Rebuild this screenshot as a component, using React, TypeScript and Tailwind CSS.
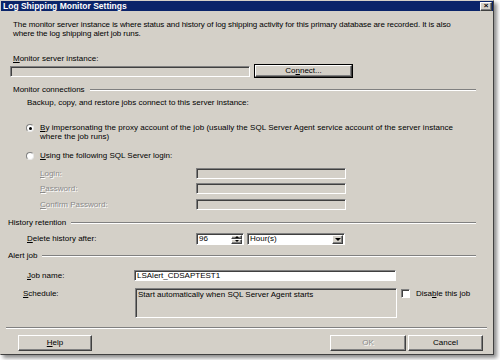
const sunken =
    'border border-t-[#808080] border-l-[#808080] border-b-white border-r-white shadow-[inset_1px_1px_0_#404040]'
const raised =
    'border border-t-white border-l-white border-b-[#404040] border-r-[#404040] shadow-[inset_-1px_-1px_0_#808080] bg-[#d4d0c8]'

function GroupHeader({ label, indent }: { label: string; indent: string }) {
    return (
        <div className={`flex items-center h-[9px] leading-[9px] mr-[17px] ${indent}`}>
            <span className="pr-[5px] whitespace-nowrap">{label}</span>
            <div className="flex-1 h-[2px] border-t border-t-[#808080] border-b border-b-white" />
        </div>
    )
}

function Radio({ checked }: { checked?: boolean }) {
    return (
        <div className="w-[8px] h-[8px] rounded-full bg-white border border-t-[#808080] border-l-[#808080] border-b-[#e8e8e8] border-r-[#e8e8e8] flex items-center justify-center shrink-0">
            {checked && <div className="w-[3px] h-[3px] rounded-full bg-black" />}
        </div>
    )
}

function DisabledRow({ label, u, rest, className }: { label?: string; u: string; rest: string; className: string }) {
    return (
        <div className={`flex items-center h-[11px] ${className}`}>
            <span className="ml-[39px] w-[156px] text-[#8a8a8a] [text-shadow:1px_1px_0_#fff]">
                {label}
                <u>{u}</u>
                {rest}
            </span>
            <div className={`w-[150px] h-[11px] bg-[#d4d0c8] ${sunken}`} />
        </div>
    )
}

export default function App() {
    return (
        <div className="w-[500px] h-[360px] bg-white overflow-hidden font-['Liberation_Sans',Arial,sans-serif] text-[8px] text-black">
            <div className="w-[494px] h-[355px] bg-[#d4d0c8] border border-t-[#d4d0c8] border-l-[#d4d0c8] border-b-[#404040] border-r-[#404040] shadow-[3px_3px_4px_rgba(0,0,0,0.45)] flex flex-col">
                <div className="h-[10px] bg-[#0a246a] flex items-center justify-between pl-[2px] pr-[1px]">
                    <span className="text-white font-bold text-[8.5px] leading-[10px]">Log Shipping Monitor Settings</span>
                    <div className={`w-[12px] h-[9px] ${raised} flex items-center justify-center text-[8px] leading-none font-bold`}>×</div>
                </div>

                <div className="ml-[12px] mt-[9px] leading-[9px] tracking-[-0.08px]">
                    The monitor server instance is where status and history of log shipping activity for this primary database are recorded. It is also
                    <br />
                    where the log shipping alert job runs.
                </div>

                <div className="ml-[12px] mt-[16px] h-[9px] leading-[9px]">
                    <u>M</u>onitor server instance:
                </div>
                <div className="mt-[1px] h-[14px] flex items-center">
                    <div className={`ml-[9px] w-[240px] h-[11px] bg-[#d4d0c8] ${sunken}`} />
                    <div className="ml-[4px] w-[99px] h-[14px] border border-black">
                        <div className={`w-full h-full ${raised} flex items-center justify-center leading-none`}>
                            Co<u>n</u>nect...
                        </div>
                    </div>
                </div>

                <div className="mt-[7px]">
                    <GroupHeader label="Monitor connections" indent="ml-[12px]" />
                </div>
                <div className="ml-[26px] mt-[4px] h-[9px] leading-[9px]">
                    Backup, copy, and restore jobs connect to this server instance:
                </div>

                <div className="ml-[25px] mt-[16px] flex items-start gap-[6px]">
                    <div className="mt-[1px]">
                        <Radio checked />
                    </div>
                    <div className="leading-[9px] tracking-[0.04px]">
                        <u>B</u>y impersonating the proxy account of the job (usually the SQL Server Agent service account of the server instance
                        <br />
                        where the job runs)
                    </div>
                </div>
                <div className="ml-[25px] mt-[10px] h-[9px] flex items-center gap-[6px]">
                    <Radio />
                    <span className="leading-[9px]">
                        <u>U</u>sing the following SQL Server login:
                    </span>
                </div>

                <DisabledRow u="L" rest="ogin:" className="mt-[8px]" />
                <DisabledRow u="P" rest="assword:" className="mt-[4px]" />
                <DisabledRow u="C" rest="onfirm Password:" className="mt-[5px]" />

                <div className="mt-[8px]">
                    <GroupHeader label="History retention" indent="ml-[7px]" />
                </div>
                <div className="mt-[6px] h-[12px] flex items-center">
                    <span className="ml-[26px] w-[169px]">
                        <u>D</u>elete history after:
                    </span>
                    <div className={`w-[48px] h-[12px] bg-white ${sunken} flex items-center justify-between pl-[2px] pr-[1px]`}>
                        <span className="leading-none">96</span>
                        <div className="w-[11px] h-[9px] flex flex-col">
                            <div className={`flex-1 ${raised} flex items-center justify-center`}>
                                <div className="w-0 h-0 border-l-[2px] border-r-[2px] border-b-[2px] border-l-transparent border-r-transparent border-b-black" />
                            </div>
                            <div className={`flex-1 ${raised} flex items-center justify-center`}>
                                <div className="w-0 h-0 border-l-[2px] border-r-[2px] border-t-[2px] border-l-transparent border-r-transparent border-t-black" />
                            </div>
                        </div>
                    </div>
                    <div className={`ml-[3px] w-[98px] h-[12px] bg-white ${sunken} flex items-center justify-between pl-[2px] pr-[1px]`}>
                        <span className="leading-none">Hour(s)</span>
                        <div className={`w-[11px] h-[9px] ${raised} flex items-center justify-center`}>
                            <div className="w-0 h-0 border-l-[3px] border-r-[3px] border-t-[3px] border-l-transparent border-r-transparent border-t-black" />
                        </div>
                    </div>
                </div>

                <div className="mt-[6px]">
                    <GroupHeader label="Alert job" indent="ml-[7px]" />
                </div>
                <div className="mt-[10px] h-[11px] flex items-center">
                    <span className="ml-[26px] w-[107px]">
                        <u>J</u>ob name:
                    </span>
                    <div className={`w-[262px] h-[11px] bg-white ${sunken} flex items-center pl-[2px] leading-none`}>
                        LSAlert_CDSAPTEST1
                    </div>
                </div>
                <div className="mt-[7px] h-[30px] flex items-start">
                    <span className="ml-[22px] w-[112px] mt-[1px] leading-[9px]">
                        <u>S</u>chedule:
                    </span>
                    <div className={`w-[262px] h-[30px] bg-[#d4d0c8] ${sunken} pl-[2px] pt-[1px] leading-[9px]`}>
                        Start automatically when SQL Server Agent starts
                    </div>
                    <div className={`ml-[4px] mt-[1px] w-[9px] h-[9px] bg-white ${sunken}`} />
                    <span className="ml-[6px] mt-[1px] leading-[9px]">
                        Disa<u>b</u>le this job
                    </span>
                </div>

                <div className="mt-[9px] ml-[5px] mr-[6px] h-[2px] border-t border-t-[#808080] border-b border-b-white" />

                <div className="mt-[6px] h-[16px] flex items-center">
                    <div className={`ml-[17px] w-[74px] h-[16px] ${raised} flex items-center justify-center leading-none`}>
                        <u>H</u>elp
                    </div>
                    <div className={`ml-[238px] w-[76px] h-[16px] ${raised} flex items-center justify-center leading-none text-[#8a8a8a] [text-shadow:1px_1px_0_#fff]`}>
                        OK
                    </div>
                    <div className={`ml-[2px] w-[75px] h-[16px] ${raised} flex items-center justify-center leading-none`}>
                        Cancel
                    </div>
                </div>
            </div>
        </div>
    )
}
